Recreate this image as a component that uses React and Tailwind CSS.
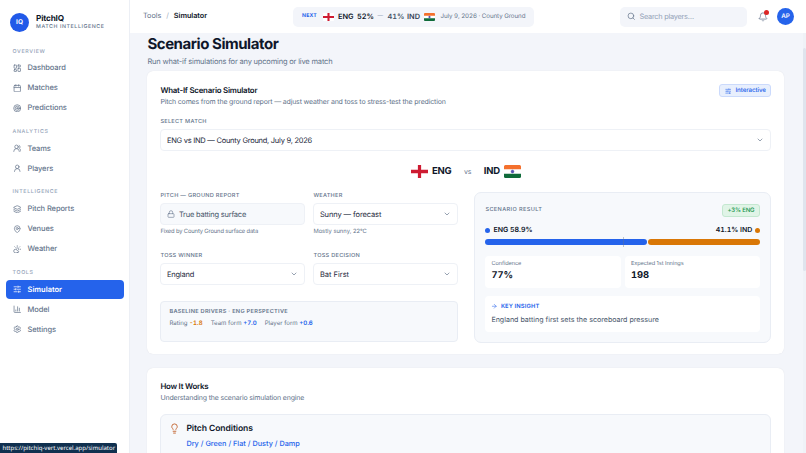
import clsx from 'clsx'
import {
  LayoutDashboard,
  Calendar,
  Target,
  UsersRound,
  UserRound,
  Layers,
  MapPin,
  CloudSun,
  SlidersHorizontal,
  ChartColumn,
  Settings,
  Search,
  Bell,
  Lock,
  ChevronDown,
  ArrowRight,
  Lightbulb,
} from 'lucide-react'

const NAV = [
  {
    title: 'Overview',
    items: [
      { label: 'Dashboard', icon: LayoutDashboard },
      { label: 'Matches', icon: Calendar },
      { label: 'Predictions', icon: Target },
    ],
  },
  {
    title: 'Analytics',
    items: [
      { label: 'Teams', icon: UsersRound },
      { label: 'Players', icon: UserRound },
    ],
  },
  {
    title: 'Intelligence',
    items: [
      { label: 'Pitch Reports', icon: Layers },
      { label: 'Venues', icon: MapPin },
      { label: 'Weather', icon: CloudSun },
    ],
  },
  {
    title: 'Tools',
    items: [
      { label: 'Simulator', icon: SlidersHorizontal, active: true },
      { label: 'Model', icon: ChartColumn },
      { label: 'Settings', icon: Settings },
    ],
  },
]

const DRIVERS = [
  { label: 'Rating', value: '-1.8', color: 'text-[#d97706]' },
  { label: 'Team form', value: '+7.0', color: 'text-[#2563eb]' },
  { label: 'Player form', value: '+0.6', color: 'text-[#2563eb]' },
]

const ENG_PCT = 58.9

function EngFlag({ className }) {
  return (
    <svg viewBox="0 0 18 13" className={className} preserveAspectRatio="none">
      <rect width="18" height="13" rx="1.5" fill="#fff" />
      <path d="M9 0v13M0 6.5h18" stroke="#ce1b32" strokeWidth="3.4" />
    </svg>
  )
}

function IndFlag({ className }) {
  return (
    <svg viewBox="0 0 18 13" className={className} preserveAspectRatio="none">
      <rect width="18" height="13" rx="1.5" fill="#fff" />
      <path d="M1.5 0h15a1.5 1.5 0 0 1 1.5 1.5v2.8H0V1.5A1.5 1.5 0 0 1 1.5 0z" fill="#f4702d" />
      <path d="M0 8.7h18v2.8a1.5 1.5 0 0 1-1.5 1.5h-15A1.5 1.5 0 0 1 0 11.5z" fill="#0f6b3a" />
      <circle cx="9" cy="6.5" r="1.5" fill="#5552b5" stroke="#3a379c" strokeWidth="0.4" />
    </svg>
  )
}

function Sidebar() {
  return (
    <aside className="flex w-[130px] shrink-0 flex-col border-r border-[#eceff5] bg-white px-1.5">
      <div className="flex h-[45.5px] items-center gap-[7px] pl-[4px]">
        <div className="flex size-[19px] items-center justify-center rounded-full bg-[#2159e8] text-[6.5px] font-bold text-white">
          IQ
        </div>
        <div className="flex flex-col">
          <span className="text-[8.2px] leading-[10px] font-bold tracking-[-0.15px] text-[#0f172a]">PitchIQ</span>
          <span className="text-[5.3px] leading-[9px] font-medium tracking-[0.56px] text-[#64748b]">
            MATCH INTELLIGENCE
          </span>
        </div>
      </div>
      <nav className="flex flex-col">
        {NAV.map(group => (
          <div key={group.title} className="flex flex-col pb-[7.4px]">
            <p className="h-[13px] pl-[6.5px] text-[5.3px] leading-[12px] font-medium tracking-[0.65px] text-[#94a3b8] uppercase">
              {group.title}
            </p>
            {group.items.map(item => (
              <NavItem key={item.label} item={item} />
            ))}
          </div>
        ))}
      </nav>
    </aside>
  )
}

function NavItem({ item }) {
  const Icon = item.icon
  return (
    <a
      className={clsx(
        'mb-[1px] flex h-[19px] w-[118px] items-center gap-[6.5px] rounded-[4px] pl-[6.5px] text-[7.5px]',
        item.active ? 'bg-[#2563eb] font-semibold text-white' : 'font-medium tracking-[-0.1px] text-[#64748b]'
      )}
    >
      <Icon size={8.5} strokeWidth={2} />
      {item.label}
    </a>
  )
}

function Header() {
  return (
    <header className="flex h-[33px] shrink-0 items-center bg-white">
      <div className="flex w-[163px] items-center gap-[5px] pl-[13px] text-[7.3px] tracking-[-0.05px] text-[#64748b]">
        <span>Tools</span>
        <span className="text-[#a5b0c2]">/</span>
        <span className="font-semibold text-[#0f172a]">Simulator</span>
      </div>
      <div className="flex h-5 w-[241px] items-center rounded-[5px] bg-[#f3f5fa] pl-[9px] text-[7.4px] font-semibold text-[#0f172a] tabular-nums">
        <span className="w-[21px] shrink-0 text-[5.2px] font-bold tracking-[0.2px] text-[#2563eb]">NEXT</span>
        <EngFlag className="h-2 w-[11px] shrink-0" />
        <span className="ml-[4px] w-[19px] shrink-0">ENG</span>
        <span className="w-[20.5px] shrink-0">52%</span>
        <span className="w-[10px] shrink-0 text-[5.5px] font-normal text-[#94a3b8]">—</span>
        <span className="w-[19.5px] shrink-0 text-[#475569]">41%</span>
        <span className="w-[16.5px] shrink-0 text-[#334155]">IND</span>
        <IndFlag className="h-2 w-[11px] shrink-0" />
        <span className="ml-[6px] text-[6.2px] font-normal tracking-[-0.07px] whitespace-nowrap text-[#64748b]">
          July 9, 2026 · County Ground
        </span>
      </div>
      <div className="ml-[86px] flex h-5 w-[127px] items-center gap-[4px] rounded-[5px] bg-[#f3f5fa] pl-[7px] text-[7.4px] tracking-[-0.27px] text-[#94a3b8]">
        <Search size={8.5} strokeWidth={2} className="text-[#64748b]" />
        <span className="pt-px">Search players…</span>
      </div>
      <div className="relative ml-[10.5px]">
        <Bell size={10} strokeWidth={1.8} className="text-[#64748b]" />
        <span className="absolute -top-[1.5px] -right-[1px] size-[4.5px] rounded-full bg-[#dc2626]" />
      </div>
      <div className="ml-[9.5px] flex size-[17px] items-center justify-center rounded-full bg-[#2563eb] text-[6.3px] font-semibold text-white">
        AP
      </div>
    </header>
  )
}

function Label({ children }) {
  return (
    <p className="h-[11px] text-[5.6px] leading-[8px] font-medium tracking-[0.27px] text-[#64748b] uppercase">
      {children}
    </p>
  )
}

function SelectBox({ value, className }) {
  return (
    <div
      className={clsx(
        'flex h-[22px] items-center justify-between rounded-[4px] border border-[#eef1f6] bg-white pr-[6px] pl-[5.5px] text-[7.5px] text-[#1e293b]',
        className
      )}
    >
      {value}
      <ChevronDown size={8} strokeWidth={2} className="text-[#64748b]" />
    </div>
  )
}

function Controls() {
  return (
    <div className="flex w-[298px] flex-col">
      <div className="grid grid-cols-2 gap-x-2">
        <div className="h-[60px]">
          <Label>Pitch — Ground Report</Label>
          <div className="flex h-[22px] items-center gap-[4px] rounded-[4px] border border-[#eef1f6] bg-[#f7f9fc] pl-[5.5px] text-[7.5px] tracking-[-0.22px] text-[#475569]">
            <Lock size={8} strokeWidth={1.8} className="text-[#64748b]" />
            True batting surface
          </div>
          <p className="mt-[3px] text-[5.8px] leading-[8px] tracking-[-0.14px] text-[#64748b]">
            Fixed by County Ground surface data
          </p>
        </div>
        <div className="h-[60px]">
          <Label>Weather</Label>
          <SelectBox value="Sunny — forecast" className="tracking-[-0.1px]" />
          <p className="mt-[3px] text-[5.8px] leading-[8px] text-[#64748b]">Mostly sunny, 22°C</p>
        </div>
        <div>
          <Label>Toss Winner</Label>
          <SelectBox value="England" className="tracking-[-0.2px]" />
        </div>
        <div>
          <Label>Toss Decision</Label>
          <SelectBox value="Bat First" />
        </div>
      </div>
      <div className="mt-4 h-[41px] rounded-[4px] border border-[#e9edf4] bg-[#f7f9fc] px-2 pt-[6px]">
        <p className="text-[5.6px] leading-[8px] font-semibold tracking-[0.3px] text-[#64748b] uppercase">
          Baseline drivers · ENG perspective
        </p>
        <div className="mt-[4px] flex gap-2 text-[6.1px] leading-[8px] text-[#64748b] tabular-nums">
          {DRIVERS.map(d => (
            <span key={d.label}>
              {d.label} <span className={clsx('font-semibold', d.color)}>{d.value}</span>
            </span>
          ))}
        </div>
      </div>
    </div>
  )
}

function Stat({ label, value }) {
  return (
    <div className="flex h-8 flex-1 flex-col rounded-[4px] bg-white px-[6px] pt-[4px]">
      <span className="text-[5.6px] leading-[8px] tracking-[-0.07px] text-[#64748b]">{label}</span>
      <span className="mt-[2px] text-[9.4px] leading-[12px] font-bold text-[#0f172a] tabular-nums">{value}</span>
    </div>
  )
}

function Result() {
  return (
    <div className="-mt-[0.5px] flex h-[151px] w-[297px] flex-col rounded-[7px] border border-[#e9edf4] bg-[#f7f9fc] px-[10px] pt-[11px]">
      <div className="flex h-[13px] items-center justify-between">
        <span className="text-[5.6px] font-medium tracking-[0.38px] text-[#64748b]">SCENARIO RESULT</span>
        <span className="flex h-[13px] items-center rounded-[3px] border border-[#c4e8d0] bg-[#e0f4e7] px-[5px] text-[6px] font-medium tracking-[-0.15px] text-[#15934a]">
          +3% ENG
        </span>
      </div>
      <div className="mt-[8px] flex h-[11px] items-center justify-between text-[7px] font-semibold text-[#0f172a] tabular-nums">
        <span className="flex items-center gap-[3px]">
          <i className="size-[5px] rounded-full bg-[#2563eb]" />
          ENG 58.9%
        </span>
        <span className="flex items-center gap-[3px]">
          41.1% IND
          <i className="size-[5px] rounded-full bg-[#d97706]" />
        </span>
      </div>
      <div className="relative mt-[3px] flex h-[6px] gap-[1px]">
        <div className="rounded-full bg-[#2563eb]" style={{ width: `${ENG_PCT}%` }} />
        <div className="flex-1 rounded-full bg-[#d97706]" />
        <span className="absolute -top-[2px] left-1/2 h-[10px] w-px bg-[#64748b]/40" />
      </div>
      <div className="mt-[11px] flex gap-[4px]">
        <Stat label="Confidence" value="77%" />
        <Stat label="Expected 1st Innings" value="198" />
      </div>
      <div className="mt-2 flex h-9 flex-col rounded-[4px] bg-white px-[6px] pt-[6px]">
        <span className="flex items-center gap-[3px] text-[5.8px] leading-[9px] font-semibold tracking-[0.13px] text-[#2563eb]">
          <ArrowRight size={6.5} strokeWidth={2} />
          KEY INSIGHT
        </span>
        <span className="mt-[3px] text-[7.1px] leading-[11px] text-[#475569]">
          England batting first sets the scoreboard pressure
        </span>
      </div>
    </div>
  )
}

function SimulatorCard() {
  return (
    <section className="flex h-[283px] shrink-0 flex-col rounded-[6px] bg-white px-[13px] pt-[13px] shadow-[0_0_1px_rgba(15,23,42,0.12)]">
      <div className="flex h-[34px] justify-between">
        <div>
          <h2 className="text-[7.9px] leading-[12px] font-semibold tracking-[-0.24px] text-[#0f172a]">
            What-If Scenario Simulator
          </h2>
          <p className="text-[7px] leading-[12px] tracking-[-0.18px] text-[#64748b]">
            Pitch comes from the ground report — adjust weather and toss to stress-test the prediction
          </p>
        </div>
        <span className="flex h-[13px] items-center gap-[4px] rounded-[3px] border border-[#cbdafc] bg-[#e8effd] px-[4.5px] text-[6.2px] font-medium tracking-[-0.08px] text-[#2563eb]">
          <SlidersHorizontal size={6.5} strokeWidth={2} />
          Interactive
        </span>
      </div>
      <Label>Select Match</Label>
      <SelectBox value="ENG vs IND — County Ground, July 9, 2026" className="tracking-[-0.26px]" />
      <div className="mt-[10.5px] flex h-[20px] items-center justify-center text-[9.5px] font-bold tracking-[-0.2px] text-[#0f172a]">
        <EngFlag className="mr-[4px] h-[13px] w-[17px]" />
        ENG
        <span className="mx-[12.5px] text-[7px] font-normal text-[#64748b]">vs</span>
        IND
        <IndFlag className="ml-[4px] h-[13px] w-[17px]" />
      </div>
      <div className="mt-[10.5px] flex justify-between">
        <Controls />
        <Result />
      </div>
    </section>
  )
}

function HowItWorks() {
  return (
    <section className="mt-[14px] flex h-[160px] shrink-0 flex-col rounded-t-[6px] bg-white px-[13px] pt-[12px] shadow-[0_0_1px_rgba(15,23,42,0.12)]">
      <h2 className="text-[7.9px] leading-[12px] font-semibold tracking-[-0.24px] text-[#0f172a]">How It Works</h2>
      <p className="text-[7px] leading-[12px] tracking-[-0.18px] text-[#64748b]">
        Understanding the scenario simulation engine
      </p>
      <div className="mt-[10px] flex h-[70px] gap-[6px] rounded-[6px] border border-[#e9edf4] bg-[#f7f9fc] px-2 pt-2">
        <Lightbulb size={11} strokeWidth={2} className="text-[#c2622d]" />
        <div>
          <h3 className="text-[8.6px] leading-[13px] font-semibold tracking-[-0.1px] text-[#0f172a]">
            Pitch Conditions
          </h3>
          <p className="mt-[2px] text-[7.3px] leading-[11px] font-medium text-[#2563eb]">
            Dry / Green / Flat / Dusty / Damp
          </p>
        </div>
      </div>
    </section>
  )
}

export default function App() {
  return (
    <div className="relative flex h-[453px] w-[806px] overflow-hidden bg-[#f3f5fa] font-['Inter',sans-serif] [text-rendering:geometricPrecision]">
      <Sidebar />
      <div className="flex flex-1 flex-col">
        <Header />
        <div className="flex flex-1 justify-between overflow-hidden">
          <main className="ml-[17.4px] flex w-[637px] flex-col">
            <h1 className="mt-[1px] text-[15px] leading-[19px] font-bold tracking-[-0.45px] text-[#0f172a]">
              Scenario Simulator
            </h1>
            <p className="mt-[3.4px] mb-[3px] text-[7.5px] leading-[12px] tracking-[-0.18px] text-[#64748b]">
              Run what-if simulations for any upcoming or live match
            </p>
            <SimulatorCard />
            <HowItWorks />
          </main>
          <div className="w-[3px] bg-[#eff2f7] pt-[15px]">
            <div className="h-[223px] w-[3px] rounded-full bg-[#dfe4ed]" />
          </div>
        </div>
      </div>
      <div className="absolute bottom-0 left-0 flex h-[10px] w-[117px] items-center rounded-tr-[2px] bg-[#10304f] pl-[2.5px] font-['Noto_Sans',sans-serif] text-[6px] whitespace-nowrap text-white">
        https://pitchiq-vert.vercel.app/simulator
      </div>
    </div>
  )
}
